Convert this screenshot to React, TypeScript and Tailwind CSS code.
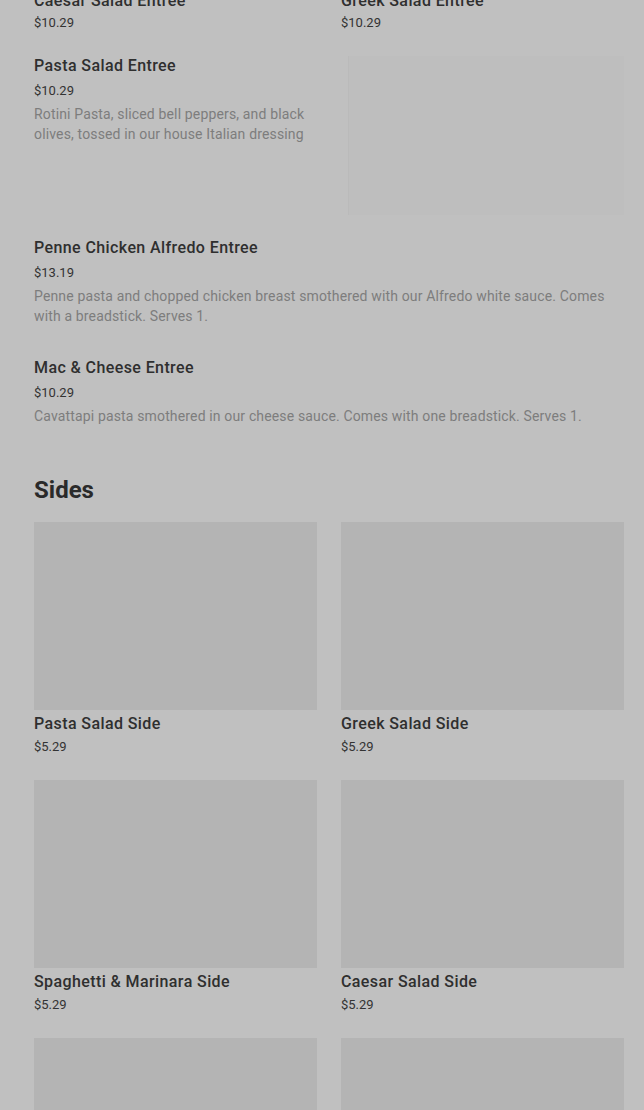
const entrees = [
  {
    name: 'Penne Chicken Alfredo Entree',
    price: '$13.19',
    desc: 'Penne pasta and chopped chicken breast smothered with our Alfredo white sauce. Comes with a breadstick. Serves 1.',
  },
  {
    name: 'Mac & Cheese Entree',
    price: '$10.29',
    desc: 'Cavattapi pasta smothered in our cheese sauce. Comes with one breadstick. Serves 1.',
  },
];

const sides = [
  { name: 'Pasta Salad Side', price: '$5.29' },
  { name: 'Greek Salad Side', price: '$5.29' },
  { name: 'Spaghetti & Marinara Side', price: '$5.29' },
  { name: 'Caesar Salad Side', price: '$5.29' },
  { name: 'Breadsticks Side', price: '$3.49' },
  { name: 'Garden Salad Side', price: '$5.29' },
];

function SideCard({ name, price }: { name: string; price: string }) {
  return (
    <div className="flex flex-col">
      <div className="h-[188px] w-full bg-[#b4b4b4]"></div>
      <div className="mt-[2px] text-base leading-6 font-medium tracking-[0.4px] text-[#2f2f2f]">{name}</div>
      <div className="mt-[1px] text-[13px] leading-5 text-[#333333]">{price}</div>
    </div>
  );
}

export default function App() {
  return (
    <div
      className="min-h-[1110px] overflow-hidden bg-[#c0c0c0] pl-[34px] pr-[20px]"
      style={{ fontFamily: 'Roboto, "Liberation Sans", sans-serif' }}
    >
      {/* tail of the previous grid row */}
      <div className="mt-[-11px] grid grid-cols-2 gap-x-6">
        <div>
          <div className="text-base leading-6 font-medium tracking-[0.4px] text-[#2f2f2f]">Caesar Salad Entree</div>
          <div className="text-[13px] leading-5 text-[#333333]">$10.29</div>
        </div>
        <div>
          <div className="text-base leading-6 font-medium tracking-[0.4px] text-[#2f2f2f]">Greek Salad Entree</div>
          <div className="text-[13px] leading-5 text-[#333333]">$10.29</div>
        </div>
      </div>

      {/* Pasta salad entree with image */}
      <div className="mt-[21px] flex items-start">
        <div className="flex-1 pr-6">
          <div className="text-base leading-6 font-medium tracking-[0.4px] text-[#2f2f2f]">Pasta Salad Entree</div>
          <div className="mt-[3px] text-[13px] leading-5 text-[#333333]">$10.29</div>
          <p className="mt-[3px] text-sm leading-5 tracking-[0.15px] text-[#7d7d7d]">
            Rotini Pasta, sliced bell peppers, and black olives, tossed in our house Italian dressing
          </p>
        </div>
        <div className="mt-[2px] h-[159px] w-[276px] shrink-0 border-l border-[#bababa] bg-[#bebebe]"></div>
      </div>

      {/* text only entrees */}
      <div className="mt-[21px] flex flex-col gap-[30px]">
        {entrees.map((e) => (
          <div key={e.name}>
            <div className="text-base leading-6 font-medium tracking-[0.4px] text-[#2f2f2f]">{e.name}</div>
            <div className="mt-[3px] text-[13px] leading-5 text-[#333333]">{e.price}</div>
            <p className="mt-[3px] text-sm leading-5 tracking-[0.15px] text-[#7d7d7d]">{e.desc}</p>
          </div>
        ))}
      </div>

      {/* Sides */}
      <h2 className="mt-[48px] text-2xl leading-8 font-bold text-[#2a2a2a]">Sides</h2>
      <div className="mt-[16px] grid grid-cols-2 gap-x-6 gap-y-[23px]">
        {sides.map((s) => (
          <SideCard key={s.name} name={s.name} price={s.price} />
        ))}
      </div>
    </div>
  );
}
